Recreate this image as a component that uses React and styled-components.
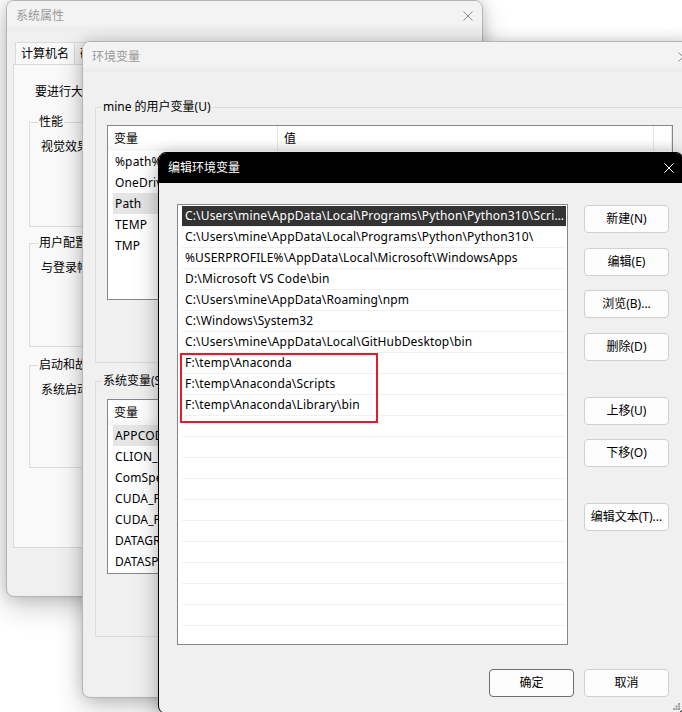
import React from 'react'
import styled, { createGlobalStyle } from 'styled-components'

const GlobalStyle = createGlobalStyle`
  html, body {
    margin: 0;
    padding: 0;
    background: #fff;
  }
  body {
    font-family: "Noto Sans", "Noto Sans CJK SC", sans-serif;
    font-size: 12px;
    line-height: 16px;
    color: #000;
  }
  * {
    box-sizing: border-box;
  }
`

const Desktop = styled.div`
  position: relative;
  width: 682px;
  height: 712px;
  overflow: hidden;
  background: #fff;
`

// windows sit on the desktop at their own coordinates
const Window = styled.div`
  position: absolute;
  left: ${p => p.$left}px;
  top: ${p => p.$top}px;
  width: ${p => p.$width}px;
  height: ${p => p.$height}px;
  display: flex;
  flex-direction: column;
  background: #f0f0f0;
  border: 1px solid ${p => (p.$active ? '#000' : '#b4b4b4')};
  border-radius: 8px;
  box-shadow: 0 0 14px rgba(0, 0, 0, 0.16), 0 10px 28px rgba(0, 0, 0, 0.2);
  overflow: hidden;
`

const TitleBar = styled.div`
  flex: none;
  height: 30px;
  display: flex;
  align-items: center;
  justify-content: space-between;
  padding: 0 9px 0 9px;
  background: ${p =>
    p.$active ? '#000' : 'linear-gradient(#f3f3f3 0%, #f3f3f3 78%, #ebebeb 100%)'};
  color: ${p => (p.$active ? '#fff' : '#9a9a9a')};
`

const CloseIcon = ({ color }) => (
  <svg width='10' height='10' viewBox='0 0 10 10'>
    <path d='M0.5 0.5 L9.5 9.5 M9.5 0.5 L0.5 9.5' stroke={color} strokeWidth='1' fill='none' />
  </svg>
)

/* ---------- 系统属性 ---------- */

const PropsBody = styled.div`
  flex: 1;
  display: flex;
  flex-direction: column;
  padding: 11px 6px 0;
`

const Tabs = styled.div`
  display: flex;
  padding-left: 2px;
`

const Tab = styled.div`
  height: 22px;
  padding: 0 5px;
  display: flex;
  align-items: center;
  border: 1px solid #d9d9d9;
  border-bottom: none;
  margin-right: -1px;
  background: ${p => (p.$active ? '#f9f9f9' : '#f0f0f0')};
  color: #000;
`

const TabPanel = styled.div`
  height: 484px;
  display: flex;
  flex-direction: column;
  padding: 19px 15px 0;
  border: 1px solid #d9d9d9;
  background: #f9f9f9;
`

const Intro = styled.div`
  margin-left: 6px;
`

const Group = styled.fieldset`
  margin: ${p => p.$mt}px 0 0;
  padding: 0 8px;
  min-width: 0;
  height: ${p => p.$height}px;
  border: 1px solid #dcdcdc;
  display: flex;
  flex-direction: column;
`

const Legend = styled.legend`
  padding: 0 1px;
  margin-left: ${p => p.$ml || 0}px;
`

const GroupText = styled.div`
  margin: 9px 0 0 3px;
`

const GroupAction = styled.div`
  margin-top: auto;
  margin-bottom: 10px;
  display: flex;
  justify-content: flex-end;
`

/* ---------- 环境变量 ---------- */

const EnvBody = styled.div`
  flex: 1;
  display: flex;
  flex-direction: column;
  padding: 27px 12px 0;
`

const EnvGroup = styled.fieldset`
  margin: ${p => p.$mt}px 0 0;
  padding: 0 11px;
  min-width: 0;
  height: 264px;
  border: 1px solid #dcdcdc;
  display: flex;
  flex-direction: column;
`

const VarList = styled.div`
  margin-top: 10px;
  width: 566px;
  height: 175px;
  border: 1px solid #828790;
  background: #fff;
  overflow: hidden;
`

const VarHeader = styled.div`
  height: 25px;
  display: grid;
  grid-template-columns: 170px 376px 1fr;
  background: linear-gradient(#fff 0%, #fff 60%, #f6f6f6 100%);
`

const HeadCell = styled.div`
  display: flex;
  align-items: center;
  padding-left: 6px;
  border-right: 1px solid #e5e5e5;
`

const VarRow = styled.div`
  height: 21px;
  margin: 0 2px 0 5px;
  display: grid;
  grid-template-columns: 165px 1fr;
  align-items: center;
  padding-left: 2px;
  background: ${p => (p.$selected ? '#e5e5e5' : 'transparent')};
  white-space: nowrap;
  letter-spacing: 0.15px;
`

const VarCell = styled.div`
  overflow: hidden;
  text-overflow: ellipsis;
  padding-right: 6px;
`

const ButtonRow = styled.div`
  margin-top: 13px;
  display: flex;
  justify-content: flex-end;
  gap: 10px;
`

/* ---------- 编辑环境变量 ---------- */

const EditBody = styled.div`
  flex: 1;
  position: relative;
  display: grid;
  grid-template-columns: 391px 85px;
  grid-template-rows: 441px auto;
  column-gap: 16px;
  padding: 21px 14px 0 18px;
`

const PathList = styled.div`
  position: relative;
  border: 1px solid #828790;
  background: #fff;
  padding-top: 1px;
  overflow: hidden;
`

const PathRow = styled.div`
  display: block;
  height: 21px;
  margin: 0 1px 0 4px;
  padding: 0 2px 0 3px;
  line-height: 20px;
  border-bottom: 1px solid #f0f0f0;
  background: ${p => (p.$selected ? '#333' : 'transparent')};
  color: ${p => (p.$selected ? '#fff' : '#000')};
  white-space: nowrap;
  overflow: hidden;
  text-overflow: ellipsis;
  letter-spacing: 0.15px;
`

// red annotation drawn over the list
const Highlight = styled.div`
  position: absolute;
  left: 2px;
  top: 148px;
  width: 198px;
  height: 70px;
  border: 2px solid #e31b2b;
  pointer-events: none;
`

const SideButtons = styled.div`
  display: flex;
  flex-direction: column;
`

const Button = styled.button`
  flex: none;
  width: 85px;
  height: 28px;
  margin-top: ${p => p.$mt || 0}px;
  padding: 0;
  font-family: inherit;
  font-size: 12px;
  line-height: 16px;
  color: #000;
  background: #fdfdfd;
  border: 1px solid ${p => (p.$default ? '#6e6e6e' : '#d0d0d0')};
  border-radius: 4px;
`

const Footer = styled.div`
  grid-column: 1 / 3;
  margin-top: 24px;
  display: flex;
  justify-content: flex-end;
  gap: 10px;
`

const Grip = styled.svg`
  position: absolute;
  right: 3px;
  bottom: 3px;
`

const userVars = [
  ['%path%', '%USERPROFILE%\\AppData\\Local\\Microsoft\\WindowsApps'],
  ['OneDrive', 'C:\\Users\\mine\\OneDrive'],
  ['Path', 'C:\\Users\\mine\\AppData\\Local\\Programs\\Python\\Python310\\Scripts\\;...'],
  ['TEMP', '%USERPROFILE%\\AppData\\Local\\Temp'],
  ['TMP', '%USERPROFILE%\\AppData\\Local\\Temp']
]

const systemVars = [
  ['APPCODE_VM_OPTIONS', 'D:\\jetbra\\vmoptions\\appcode.vmoptions'],
  ['CLION_VM_OPTIONS', 'D:\\jetbra\\vmoptions\\clion.vmoptions'],
  ['ComSpec', 'C:\\Windows\\system32\\cmd.exe'],
  ['CUDA_PATH', 'C:\\Program Files\\NVIDIA GPU Computing Toolkit\\CUDA\\v11.6'],
  ['CUDA_PATH_V11_6', 'C:\\Program Files\\NVIDIA GPU Computing Toolkit\\CUDA\\v11.6'],
  ['DATAGRIP_VM_OPTIONS', 'D:\\jetbra\\vmoptions\\datagrip.vmoptions'],
  ['DATASPELL_VM_OPTIONS', 'D:\\jetbra\\vmoptions\\dataspell.vmoptions']
]

const paths = [
  'C:\\Users\\mine\\AppData\\Local\\Programs\\Python\\Python310\\Scripts\\',
  'C:\\Users\\mine\\AppData\\Local\\Programs\\Python\\Python310\\',
  '%USERPROFILE%\\AppData\\Local\\Microsoft\\WindowsApps',
  'D:\\Microsoft VS Code\\bin',
  'C:\\Users\\mine\\AppData\\Roaming\\npm',
  'C:\\Windows\\System32',
  'C:\\Users\\mine\\AppData\\Local\\GitHubDesktop\\bin',
  'F:\\temp\\Anaconda',
  'F:\\temp\\Anaconda\\Scripts',
  'F:\\temp\\Anaconda\\Library\\bin'
]

const VariableTable = ({ rows, selected }) => (
  <VarList>
    <VarHeader>
      <HeadCell>变量</HeadCell>
      <HeadCell>值</HeadCell>
      <HeadCell />
    </VarHeader>
    {rows.map(([name, value], i) => (
      <VarRow key={name} $selected={i === selected}>
        <VarCell>{name}</VarCell>
        <VarCell>{value}</VarCell>
      </VarRow>
    ))}
  </VarList>
)

const SystemProperties = () => (
  <Window $left={6} $top={0} $width={477} $height={597}>
    <TitleBar>
      <span>系统属性</span>
      <CloseIcon color='#8a8a8a' />
    </TitleBar>
    <PropsBody>
      <Tabs>
        <Tab $active>计算机名</Tab>
        <Tab>硬件</Tab>
        <Tab>高级</Tab>
        <Tab>系统保护</Tab>
        <Tab>远程</Tab>
      </Tabs>
      <TabPanel>
        <Intro>要进行大多数更改，你必须作为管理员登录。</Intro>
        <Group $mt={14} $height={113}>
          <Legend>性能</Legend>
          <GroupText>视觉效果，处理器计划，内存使用，以及虚拟内存</GroupText>
          <GroupAction><Button>设置(S)...</Button></GroupAction>
        </Group>
        <Group $mt={8} $height={112}>
          <Legend>用户配置文件</Legend>
          <GroupText>与登录帐户相关的桌面设置</GroupText>
          <GroupAction><Button>设置(E)...</Button></GroupAction>
        </Group>
        <Group $mt={10} $height={111}>
          <Legend>启动和故障恢复</Legend>
          <GroupText>系统启动、系统故障和调试信息</GroupText>
          <GroupAction><Button>设置(T)...</Button></GroupAction>
        </Group>
      </TabPanel>
    </PropsBody>
  </Window>
)

const EnvironmentVariables = () => (
  <Window $left={82} $top={41} $width={616} $height={657}>
    <TitleBar>
      <span>环境变量</span>
      <CloseIcon color='#8a8a8a' />
    </TitleBar>
    <EnvBody>
      <EnvGroup $mt={0}>
        <Legend $ml={-5}>mine 的用户变量(U)</Legend>
        <VariableTable rows={userVars} selected={2} />
        <ButtonRow>
          <Button>新建(N)...</Button>
          <Button>编辑(E)...</Button>
          <Button>删除(D)</Button>
        </ButtonRow>
      </EnvGroup>
      <EnvGroup $mt={10}>
        <Legend $ml={-5}>系统变量(S)</Legend>
        <VariableTable rows={systemVars} selected={0} />
        <ButtonRow>
          <Button>新建(W)...</Button>
          <Button>编辑(I)...</Button>
          <Button>删除(L)</Button>
        </ButtonRow>
      </EnvGroup>
    </EnvBody>
  </Window>
)

const EditEnvironmentVariable = () => {
  const rows = Array.from({ length: 21 }, (_, i) => paths[i] || '')

  return (
    <Window $left={158} $top={152} $width={526} $height={562} $active>
      <TitleBar $active>
        <span>编辑环境变量</span>
        <CloseIcon color='#fff' />
      </TitleBar>
      <EditBody>
        <PathList>
          {rows.map((p, i) => (
            <PathRow key={i} $selected={i === 0}>{p}</PathRow>
          ))}
          <Highlight />
        </PathList>
        <SideButtons>
          <Button $mt={1}>新建(N)</Button>
          <Button $mt={15}>编辑(E)</Button>
          <Button $mt={14}>浏览(B)...</Button>
          <Button $mt={15}>删除(D)</Button>
          <Button $mt={36}>上移(U)</Button>
          <Button $mt={14}>下移(O)</Button>
          <Button $mt={36}>编辑文本(T)...</Button>
        </SideButtons>
        <Footer>
          <Button $default>确定</Button>
          <Button>取消</Button>
        </Footer>
        <Grip width='7' height='7' viewBox='0 0 7 7'>
          <rect x='5' y='0' width='2' height='2' fill='#a0a0a0' />
          <rect x='2.5' y='2.5' width='2' height='2' fill='#a0a0a0' />
          <rect x='5' y='2.5' width='2' height='2' fill='#a0a0a0' />
          <rect x='0' y='5' width='2' height='2' fill='#a0a0a0' />
          <rect x='2.5' y='5' width='2' height='2' fill='#a0a0a0' />
          <rect x='5' y='5' width='2' height='2' fill='#a0a0a0' />
        </Grip>
      </EditBody>
    </Window>
  )
}

export default function App () {
  return (
    <>
      <GlobalStyle />
      <Desktop>
        <SystemProperties />
        <EnvironmentVariables />
        <EditEnvironmentVariable />
      </Desktop>
    </>
  )
}
